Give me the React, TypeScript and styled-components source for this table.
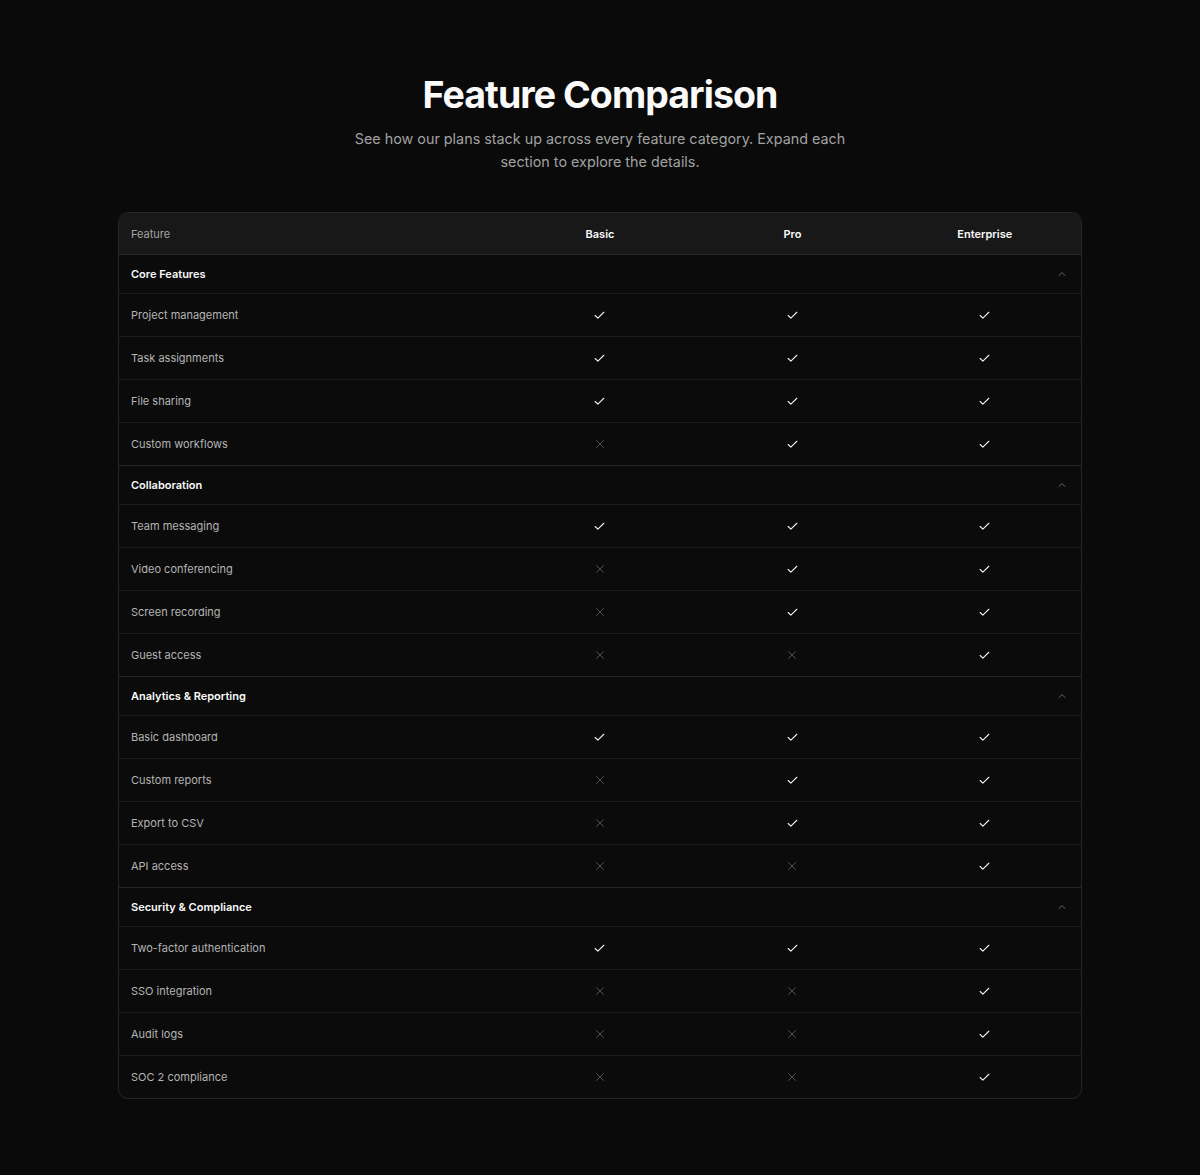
import React from "react";
import styled, { createGlobalStyle } from "styled-components";
import { Check, X, ChevronUp } from "lucide-react";

const Global = createGlobalStyle`
  html, body { margin: 0; padding: 0; background: #0a0a0a; }
  body { font-family: Inter, "Noto Sans", sans-serif; color: #fafafa; -webkit-font-smoothing: antialiased; }
  * { box-sizing: border-box; }
`;

const Page = styled.main`
  min-height: 1175px;
  padding: 71px 118px 76px;
  display: flex;
  flex-direction: column;
  align-items: center;
`;

const Title = styled.h1`
  margin: 0;
  font-size: 37.5px;
  line-height: 48px;
  font-weight: 700;
  letter-spacing: -0.025em;
  color: #fafafa;
`;

const Subtitle = styled.p`
  margin: 8px 0 0;
  max-width: 500px;
  text-align: center;
  font-size: 14.35px;
  line-height: 23px;
  color: #a1a1a1;
`;

const Card = styled.div`
  margin-top: 39px;
  width: 964px;
  border: 1px solid #262626;
  border-radius: 10px;
  overflow: hidden;
  background: #0b0b0b;
`;

const Row = styled.div<{ $h: number; $bg?: string; $border?: string }>`
  display: grid;
  grid-template-columns: 40% 20% 20% 20%;
  align-items: center;
  box-sizing: content-box;
  height: ${(p) => p.$h}px;
  background: ${(p) => p.$bg || "transparent"};
  border-bottom: 1px solid ${(p) => p.$border || "#1c1c1c"};
  &:last-child { border-bottom: none; }
`;

const HeadCell = styled.div<{ $center?: boolean }>`
  padding: 0 12px;
  font-size: 11px;
  font-weight: ${(p) => (p.$center ? 600 : 400)};
  color: ${(p) => (p.$center ? "#fafafa" : "#a1a1a1")};
  text-align: ${(p) => (p.$center ? "center" : "left")};
`;

const Group = styled.section`
  border-bottom: 1px solid #262626;
  &:last-child { border-bottom: none; }
`;

const SectionRow = styled.div`
  display: flex;
  align-items: center;
  justify-content: space-between;
  height: 39px;
  padding: 0 13px 0 12px;
  border-bottom: 1px solid #1c1c1c;
  font-size: 11px;
  font-weight: 600;
  color: #fafafa;
`;

const Chevron = styled.span`
  display: flex;
  color: #6f6f6f;
`;

const FeatureName = styled.div`
  padding: 0 12px;
  font-size: 11px;
  color: #b4b4b4;
`;

const Mark = styled.div<{ $on: boolean }>`
  display: flex;
  justify-content: center;
  color: ${(p) => (p.$on ? "#f2f2f2" : "#5a5a5a")};
`;

type Feature = [string, boolean, boolean, boolean];
const groups: { name: string; items: Feature[] }[] = [
  {
    name: "Core Features",
    items: [
      ["Project management", true, true, true],
      ["Task assignments", true, true, true],
      ["File sharing", true, true, true],
      ["Custom workflows", false, true, true],
    ],
  },
  {
    name: "Collaboration",
    items: [
      ["Team messaging", true, true, true],
      ["Video conferencing", false, true, true],
      ["Screen recording", false, true, true],
      ["Guest access", false, false, true],
    ],
  },
  {
    name: "Analytics & Reporting",
    items: [
      ["Basic dashboard", true, true, true],
      ["Custom reports", false, true, true],
      ["Export to CSV", false, true, true],
      ["API access", false, false, true],
    ],
  },
  {
    name: "Security & Compliance",
    items: [
      ["Two-factor authentication", true, true, true],
      ["SSO integration", false, false, true],
      ["Audit logs", false, false, true],
      ["SOC 2 compliance", false, false, true],
    ],
  },
];

const Cell = ({ on }: { on: boolean }) => (
  <Mark $on={on}>{on ? <Check size={13} strokeWidth={2} /> : <X size={14} strokeWidth={1.5} />}</Mark>
);

export default function App() {
  return (
    <>
      <Global />
      <Page>
        <Title>Feature Comparison</Title>
        <Subtitle>
          See how our plans stack up across every feature category. Expand each section to explore the details.
        </Subtitle>
        <Card>
          <Row $h={41} $bg="#181818" $border="#262626">
            <HeadCell>Feature</HeadCell>
            <HeadCell $center>Basic</HeadCell>
            <HeadCell $center>Pro</HeadCell>
            <HeadCell $center>Enterprise</HeadCell>
          </Row>
          {groups.map((g) => (
            <Group key={g.name}>
              <SectionRow>
                <span>{g.name}</span>
                <Chevron>
                  <ChevronUp size={12} strokeWidth={1.8} />
                </Chevron>
              </SectionRow>
              {g.items.map(([name, a, b, c]) => (
                <Row key={name} $h={42}>
                  <FeatureName>{name}</FeatureName>
                  <Cell on={a} />
                  <Cell on={b} />
                  <Cell on={c} />
                </Row>
              ))}
            </Group>
          ))}
        </Card>
      </Page>
    </>
  );
}
